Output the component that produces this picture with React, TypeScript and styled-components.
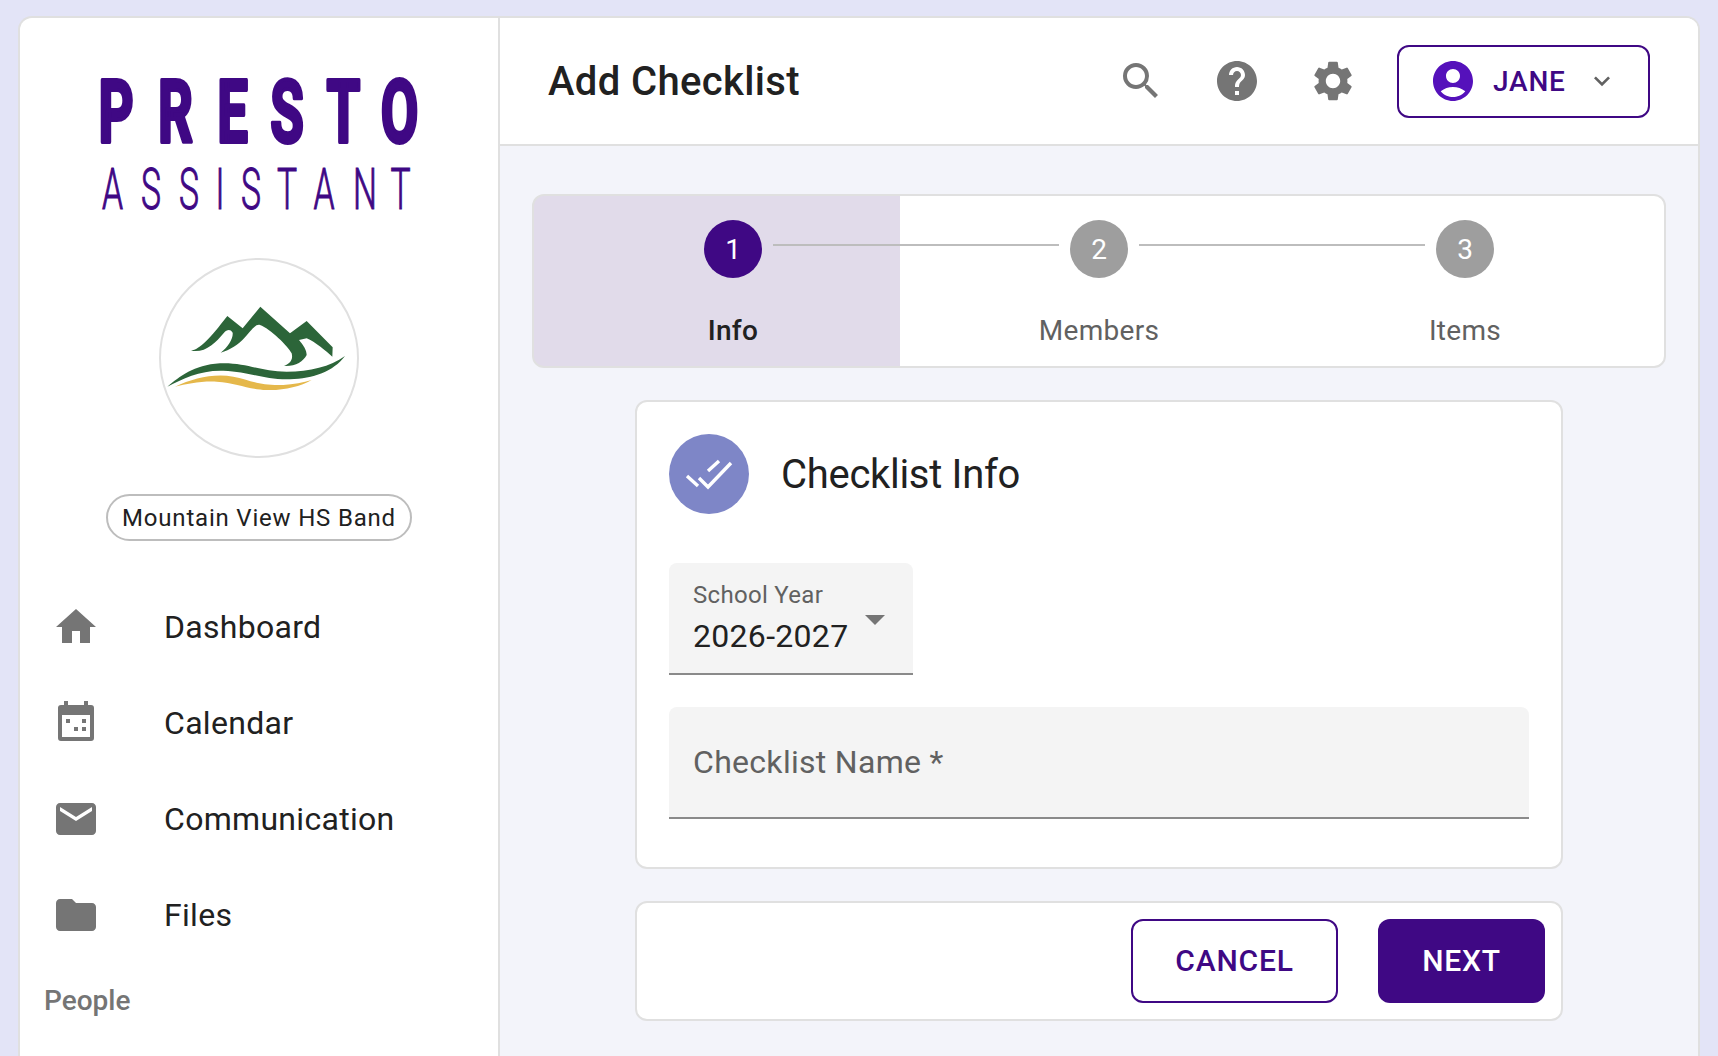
import styled, { createGlobalStyle } from "styled-components";
import { MdHome, MdEmail, MdFolder, MdSearch, MdHelp, MdSettings, MdAccountCircle, MdExpandMore } from "react-icons/md";

const purple = "#3f0884";
const line = "#e0e0e0";

// letter centres of the wordmark, the logo spaces them unevenly
const boldScale = 0.62;
const thinScale = 0.58;
const prestoX = [27, 86.5, 143.5, 198, 254.5, 310.5].map((x) => x / boldScale).join(" ");
const assistantX = [23.5, 62, 100, 131, 162, 198, 235, 276, 311.5].map((x) => x / thinScale).join(" ");

function CalendarIcon() {
  return (
    <svg width="48" height="48" viewBox="0 2 48 48" fill="currentColor">
      <path
        fillRule="evenodd"
        d="M12 4h4v4h16V4h4v4h3a3 3 0 0 1 3 3v30a3 3 0 0 1-3 3H9a3 3 0 0 1-3-3V11a3 3 0 0 1 3-3h3zM10 18v22h28V18z"
      />
      <path d="M14 22h4v4h-4zM30 22h4v4h-4zM22 30h4v4h-4zM30 30h4v4h-4z" />
    </svg>
  );
}

function Logo() {
  return (
    <LogoSvg width="340" height="150" viewBox="0 0 340 150">
      <BoldWord textAnchor="middle" x={prestoX} transform={`translate(0 72) scale(${boldScale} 1)`}>
        PRESTO
      </BoldWord>
      <ThinWord textAnchor="middle" x={assistantX} transform={`translate(0 138.5) scale(${thinScale} 1)`}>
        ASSISTANT
      </ThinWord>
    </LogoSvg>
  );
}

function BandMark() {
  return (
    <svg width="196" height="196" viewBox="33 30 588 588">
      <path
        fill="#2c6539"
        d="M123 302C150 298 180 265 232 198L278 235L331 170L420 250L470 213L548 292L547 320C530 305 495 275 470 265L447 270C460 285 470 300 470 315C460 335 435 350 402 348C420 340 430 330 425 310C415 290 360 235 330 225C318 222 308 235 285 262C265 285 240 300 212 308C235 290 250 265 248 248C240 235 230 240 222 248C195 280 165 310 123 302Z"
      />
      <path
        fill="#2c6539"
        d="M52 410C90 380 130 345 210 340C290 337 330 365 410 365C480 365 540 350 585 318C550 365 490 385 420 388C340 390 300 365 220 362C150 360 100 385 52 410Z"
      />
      <path
        fill="#e5b84b"
        d="M75 410C130 385 190 370 250 380C300 390 330 408 400 405C430 403 460 398 485 390C450 410 400 422 350 420C290 418 260 398 200 395C150 393 110 402 75 410Z"
      />
    </svg>
  );
}

const navItems = [
  { label: "Dashboard", icon: <MdHome size={48} /> },
  { label: "Calendar", icon: <CalendarIcon /> },
  { label: "Communication", icon: <MdEmail size={48} /> },
  { label: "Files", icon: <MdFolder size={48} /> },
];

const steps = ["Info", "Members", "Items"];

export default function App() {
  return (
    <>
      <GlobalStyle />
      <Frame>
        <Sidebar>
          <Logo />
          <MarkCircle>
            <BandMark />
          </MarkCircle>
          <OrgPill>Mountain View HS Band</OrgPill>
          <Nav>
            {navItems.map((item) => (
              <NavRow key={item.label}>
                <NavIcon>{item.icon}</NavIcon>
                {item.label}
              </NavRow>
            ))}
          </Nav>
          <NavSection>People</NavSection>
        </Sidebar>
        <Content>
          <Header>
            <Title>Add Checklist</Title>
            <HeaderRight>
              <IconButton><MdSearch size={48} /></IconButton>
              <IconButton><MdHelp size={48} /></IconButton>
              <IconButton><MdSettings size={48} /></IconButton>
              <UserButton>
                <UserIcon><MdAccountCircle size={48} /></UserIcon>
                JANE
                <Chevron><MdExpandMore size={32} /></Chevron>
              </UserButton>
            </HeaderRight>
          </Header>
          <Main>
            <Stepper>
              {steps.map((s, i) => (
                <Step key={s}>
                  <StepHead>
                    <Connector $hidden={i === 0} />
                    <StepNumber $active={i === 0}>{i + 1}</StepNumber>
                    <Connector $hidden={i === steps.length - 1} />
                  </StepHead>
                  <StepLabel $active={i === 0}>{s}</StepLabel>
                </Step>
              ))}
            </Stepper>
            <FormCard>
              <CardHeader>
                <CardAvatar>
                  <svg width="80" height="80" viewBox="0 0 80 80" fill="none" stroke="#fff" strokeWidth="3.4">
                    <path d="M30 44l9 9 23-24M39 37l11-10M18 42l11 10" />
                  </svg>
                </CardAvatar>
                <CardTitle>Checklist Info</CardTitle>
              </CardHeader>
              <SelectField>
                <SelectText>
                  <SelectLabel>School Year</SelectLabel>
                  <SelectValue>2026-2027</SelectValue>
                </SelectText>
                <Arrow />
              </SelectField>
              <NameField>Checklist Name *</NameField>
            </FormCard>
            <ActionCard>
              <OutlineButton>CANCEL</OutlineButton>
              <SolidButton>NEXT</SolidButton>
            </ActionCard>
          </Main>
        </Content>
      </Frame>
    </>
  );
}

const GlobalStyle = createGlobalStyle`
  html, body {
    margin: 0;
    height: 100%;
    overflow: hidden;
    background: #e3e4f7;
    font-family: Roboto, "Liberation Sans", sans-serif;
    color: #212121;
  }
  * { box-sizing: border-box; }
`;

const Frame = styled.div`
  display: flex;
  height: calc(100vh - 16px);
  margin: 16px 18px 0;
  background: #fff;
  border: 2px solid ${line};
  border-bottom: none;
  border-radius: 14px 14px 0 0;
  overflow: hidden;
`;

const Sidebar = styled.aside`
  width: 480px;
  flex-shrink: 0;
  display: flex;
  flex-direction: column;
  border-right: 2px solid ${line};
`;

const LogoSvg = styled.svg`
  display: block;
  align-self: center;
  margin-top: 52px;
  flex-shrink: 0;
  overflow: visible;
`;

const BoldWord = styled.text`
  font-family: Roboto, sans-serif;
  font-weight: 700;
  font-size: 88px;
  fill: ${purple};
  stroke: ${purple};
  stroke-width: 4;
  stroke-linejoin: round;
`;

const ThinWord = styled.text`
  font-family: Roboto, sans-serif;
  font-weight: 300;
  font-size: 58px;
  fill: ${purple};
  stroke: ${purple};
  stroke-width: 1.1;
`;

const MarkCircle = styled.div`
  width: 200px;
  height: 200px;
  align-self: center;
  margin-top: 38px;
  border: 2px solid ${line};
  border-radius: 50%;
  flex-shrink: 0;
  svg { display: block; }
`;

const OrgPill = styled.div`
  align-self: center;
  margin-top: 36px;
  width: 306px;
  height: 47px;
  display: flex;
  align-items: center;
  justify-content: center;
  border: 2px solid #bdbdbd;
  border-radius: 24px;
  font-size: 24px;
  letter-spacing: 0.8px;
  flex-shrink: 0;
`;

const Nav = styled.nav`
  margin-top: 38px;
  flex-shrink: 0;
`;

const NavRow = styled.div`
  height: 96px;
  display: flex;
  align-items: center;
  gap: 64px;
  padding-left: 32px;
  font-size: 32px;
  letter-spacing: 0.3px;
`;

const NavIcon = styled.span`
  display: flex;
  width: 48px;
  height: 48px;
  color: #757575;
`;

const NavSection = styled.div`
  margin-top: 14px;
  padding-left: 24px;
  font-size: 28px;
  line-height: 48px;
  font-weight: 500;
  color: #757575;
`;

const Content = styled.div`
  flex: 1;
  min-width: 0;
  display: flex;
  flex-direction: column;
  background: #f3f4fa;
`;

const Header = styled.header`
  height: 128px;
  flex-shrink: 0;
  display: flex;
  align-items: center;
  padding: 0 48px;
  background: #fff;
  border-bottom: 2px solid ${line};
`;

const Title = styled.h1`
  margin: 0;
  font-size: 40px;
  font-weight: 500;
  letter-spacing: 0.35px;
`;

const HeaderRight = styled.div`
  margin-left: auto;
  display: flex;
  align-items: center;
  gap: 48px;
`;

const IconButton = styled.span`
  display: flex;
  width: 48px;
  height: 48px;
  color: #757575;
`;

const UserButton = styled.div`
  width: 253px;
  height: 73px;
  margin-left: -8px;
  display: flex;
  align-items: center;
  padding-left: 30px;
  border: 2px solid ${purple};
  border-radius: 12px;
  font-size: 28px;
  font-weight: 500;
  letter-spacing: 0.8px;
  color: ${purple};
`;

const UserIcon = styled.span`
  display: flex;
  margin-right: 16px;
  color: #5511bb;
`;

const Chevron = styled.span`
  display: flex;
  margin-left: 20px;
  color: #616161;
`;

const Main = styled.main`
  flex: 1;
  display: flex;
  flex-direction: column;
  align-items: center;
  padding: 48px 32px 0;
`;

const Stepper = styled.div`
  width: 100%;
  height: 174px;
  flex-shrink: 0;
  display: grid;
  grid-template-columns: repeat(3, 1fr);
  padding: 24px 16px 0;
  border: 2px solid ${line};
  border-radius: 12px;
  background: linear-gradient(to right, #e1dbea 366px, #fff 366px);
`;

const Step = styled.div`
  display: flex;
  flex-direction: column;
  align-items: center;
`;

const StepHead = styled.div`
  width: 100%;
  display: flex;
  align-items: flex-start;
`;

const Connector = styled.span<{ $hidden: boolean }>`
  flex: 1;
  height: 2px;
  margin-top: 24px;
  background: ${(props) => (props.$hidden ? "transparent" : "#bdbdbd")};
`;

const StepNumber = styled.span<{ $active: boolean }>`
  width: 58px;
  height: 58px;
  margin: 0 11px;
  flex-shrink: 0;
  display: flex;
  align-items: center;
  justify-content: center;
  border-radius: 50%;
  font-size: 28px;
  color: #fff;
  background: ${(props) => (props.$active ? purple : "#9e9e9e")};
`;

const StepLabel = styled.div<{ $active: boolean }>`
  margin-top: 33px;
  font-size: 28px;
  line-height: 40px;
  letter-spacing: 0.3px;
  font-weight: ${(props) => (props.$active ? 500 : 400)};
  color: ${(props) => (props.$active ? "#212121" : "#616161")};
`;

const FormCard = styled.section`
  width: 928px;
  margin-top: 32px;
  flex-shrink: 0;
  padding: 32px 32px 48px;
  background: #fff;
  border: 2px solid ${line};
  border-radius: 12px;
`;

const CardHeader = styled.div`
  display: flex;
  align-items: center;
  gap: 32px;
`;

const CardAvatar = styled.div`
  width: 80px;
  height: 80px;
  border-radius: 50%;
  background: #7e86c7;
  svg { display: block; }
`;

const CardTitle = styled.h2`
  margin: 0;
  font-size: 40px;
  font-weight: 400;
  letter-spacing: -0.3px;
`;

const SelectField = styled.div`
  width: 244px;
  height: 112px;
  margin-top: 49px;
  display: flex;
  justify-content: space-between;
  padding: 16px 28px 0 24px;
  background: #f4f4f4;
  border-bottom: 2px solid #8a8a8a;
  border-radius: 8px 8px 0 0;
`;

const SelectText = styled.div`
  display: flex;
  flex-direction: column;
  gap: 3px;
`;

const SelectLabel = styled.span`
  font-size: 24px;
  line-height: 32px;
  letter-spacing: 0.3px;
  color: #616161;
`;

const SelectValue = styled.span`
  font-size: 32px;
  line-height: 44px;
  letter-spacing: 0.3px;
`;

const Arrow = styled.span`
  width: 0;
  height: 0;
  margin-top: 36px;
  border-left: 10px solid transparent;
  border-right: 10px solid transparent;
  border-top: 10px solid #757575;
`;

const NameField = styled.div`
  height: 112px;
  margin-top: 32px;
  display: flex;
  align-items: center;
  padding-left: 24px;
  font-size: 32px;
  letter-spacing: 0.3px;
  color: #616161;
  background: #f4f4f4;
  border-bottom: 2px solid #8a8a8a;
  border-radius: 8px 8px 0 0;
`;

const ActionCard = styled.section`
  width: 928px;
  margin-top: 32px;
  flex-shrink: 0;
  display: flex;
  justify-content: flex-end;
  gap: 40px;
  padding: 16px;
  background: #fff;
  border: 2px solid ${line};
  border-radius: 12px;
`;

const OutlineButton = styled.button`
  width: 207px;
  height: 84px;
  padding: 0 0 2px;
  font-family: inherit;
  font-size: 30px;
  font-weight: 500;
  letter-spacing: 0.8px;
  color: ${purple};
  background: #fff;
  border: 2px solid ${purple};
  border-radius: 12px;
`;

const SolidButton = styled.button`
  width: 167px;
  height: 84px;
  padding: 0 0 2px;
  font-family: inherit;
  font-size: 30px;
  font-weight: 500;
  letter-spacing: 0.8px;
  color: #fff;
  background: ${purple};
  border: none;
  border-radius: 12px;
`;
